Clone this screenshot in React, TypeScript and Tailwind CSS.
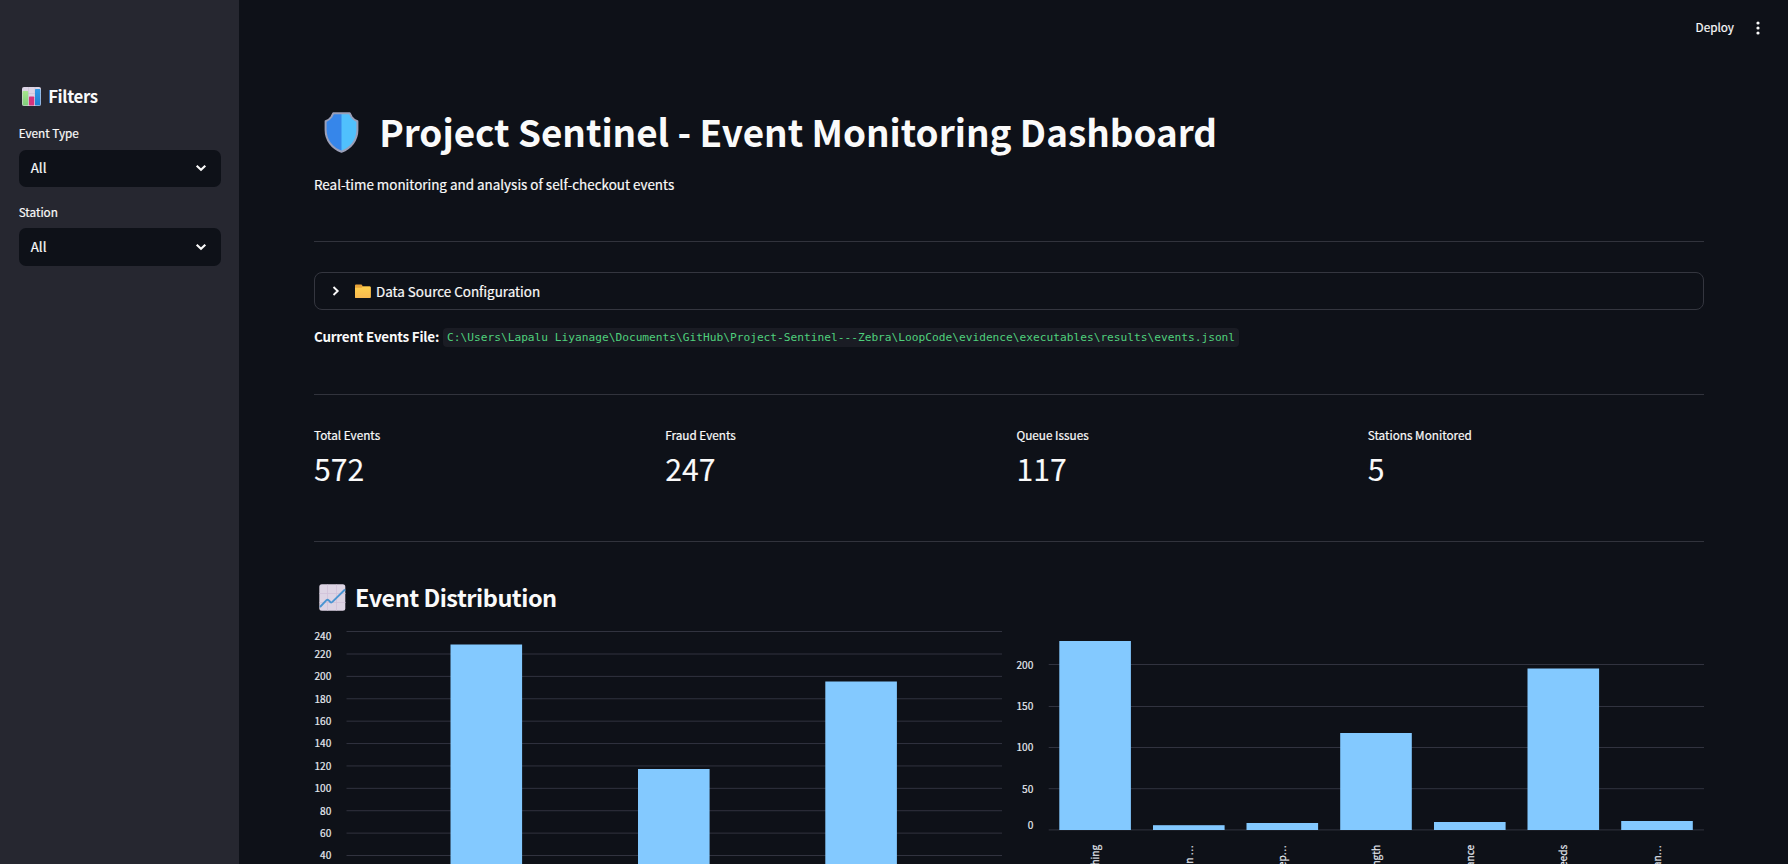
const SANS = "font-['Noto_Sans_CJK_SC','Noto_Sans',sans-serif]";

function BarsIcon() {
  return (
    <svg width="19" height="19" viewBox="0 0 19 19">
      <defs>
        <linearGradient id="gb" x1="0" y1="0" x2="0" y2="1"><stop offset="0" stopColor="#2f9be8" /><stop offset="1" stopColor="#1f7fd0" /></linearGradient>
        <linearGradient id="gg" x1="0" y1="0" x2="0" y2="1"><stop offset="0" stopColor="#a6e58c" /><stop offset="1" stopColor="#7fce7a" /></linearGradient>
      </defs>
      <rect width="19" height="19" rx="2" fill="#ddd5e6" />
      <path d="M6.5 0V19M13 0V19M0 6.5H19M0 13H19" stroke="#c9bdd4" strokeWidth="0.6" />
      <rect x="0.6" y="4" width="5.6" height="14.5" rx="0.7" fill="url(#gg)" />
      <rect x="7" y="9.5" width="5.2" height="9" rx="0.7" fill="#d6337c" />
      <rect x="13" y="2" width="5.4" height="16.5" rx="0.7" fill="url(#gb)" />
    </svg>
  );
}

function ShieldIcon() {
  return (
    <svg width="35" height="41" viewBox="0 0 35 41">
      <path d="M9 1H26L28 5Q30 8 33.6 9V18C33.6 28 27 36.500 17.500 40C8 36.500 1.400 28 1.400 18V9Q5 8 7 5Z" fill="#3686ea" />
      <path d="M17.500 1H26L28 5Q30 8 33.6 9V18C33.6 28 27 36.500 17.500 40Z" fill="#50c0fd" />
      <path d="M9.300 1.200H25.700L27.700 5Q29.800 8 33.4 9.200V18C33.4 28 27 36.300 17.500 39.700C8 36.300 1.600 28 1.600 18V9.200Q5.200 8 7.300 5Z" fill="none" stroke="#9a9fb8" strokeWidth="2" strokeLinejoin="round" />
    </svg>
  );
}

function FolderIcon() {
  return (
    <svg width="16" height="15" viewBox="0 0 16 15">
      <defs><linearGradient id="gf" x1="0" y1="0" x2="0" y2="1"><stop offset="0" stopColor="#ffd04d" /><stop offset="1" stopColor="#f9b950" /></linearGradient></defs>
      <path d="M1 0.500H6.500L8 2.500H14.700Q15.700 2.500 15.700 3.500V13Q15.700 14 14.700 14H1Q0 14 0 13V1.500Q0 0.500 1 0.500Z" fill="#e8a33a" />
      <path d="M0 3.800H6.500L8 2.500H14.700Q15.700 2.500 15.700 3.500V13Q15.700 14 14.700 14H1Q0 14 0 13Z" fill="url(#gf)" />
    </svg>
  );
}

function TrendIcon() {
  return (
    <svg width="27" height="27" viewBox="0 0 27 27" className="mb-[2px]">
      <rect x="0.300" y="0.300" width="26" height="26.500" rx="2.500" fill="#ddd4e4" />
      <path d="M8.500 0.500V26.500M17.500 0.500V26.500M0.500 9.500H26.500M0.500 18.500H26.500" stroke="#d0c1d8" strokeWidth="0.8" />
      <path d="M1 23L7.500 16.200Q8.600 15.200 9.700 16.300L11.300 18Q12.300 18.900 13.400 17.900L26 5.500" fill="none" stroke="#4a95d2" strokeWidth="1.900" />
    </svg>
  );
}

function SelectBox({ label, value }: { label: string; value: string }) {
  return (
    <div className="flex flex-col">
      <div className="flex h-[31px] items-center pb-[2px] text-[11.75px] leading-[20px]">{label}</div>
      <div className="flex h-[37.5px] items-center justify-between rounded-[7px] bg-[#0e1118] pl-3 pr-[14px] text-[13.4px]">
        <span className="pb-[2px]">{value}</span>
        <svg width="12" height="8" viewBox="0 0 12 8"><path d="M1.700 1.700L6 5.800L10.300 1.700" fill="none" stroke="#fafafa" strokeWidth="2.100" /></svg>
      </div>
    </div>
  );
}

function Metric({ label, value }: { label: string; value: string }) {
  return (
    <div className="flex flex-col">
      <span className="h-[21px] text-[11.75px] leading-[20px]">{label}</span>
      <span className="h-[47px] text-[30.2px] leading-[45px] [-webkit-text-stroke:0.1px]">{value}</span>
    </div>
  );
}

type Tick = { v: string; y: number; ty: number };
type Bar = { x: number; y: number; label?: string; cut?: boolean };

const leftTicks: Tick[] = [
  { v: "240", y: 19.5, ty: 24 },
  ...[220, 200, 180, 160, 140, 120, 100, 80, 60, 40].map((n, i) => ({
    v: String(n),
    y: 42 + i * 22.39,
    ty: 42 + i * 22.39,
  })),
];
const leftBars: Bar[] = [{ x: 136.5, y: 32.5 }, { x: 324, y: 157 }, { x: 511.3, y: 69.5 }];

const rightTicks: Tick[] = [
  { v: "200", y: 52.5, ty: 53 },
  { v: "150", y: 94.5, ty: 94.3 },
  { v: "100", y: 135.5, ty: 135.5 },
  { v: "50", y: 176.7, ty: 176.7 },
  { v: "0", y: 217.9, ty: 213.2 },
];
const rightBars: Bar[] = [
  { x: 43.3, y: 29, label: "Barcode Switching" },
  { x: 137, y: 213.2, label: "Checkout Station ", cut: true },
  { x: 230.5, y: 211, label: "Inventory Discrep", cut: true },
  { x: 324.2, y: 121, label: "Long Queue Length" },
  { x: 418, y: 210, label: "Scanner Avoidance" },
  { x: 511.5, y: 56.5, label: "Staffing Needs" },
  { x: 605.2, y: 209, label: "Weight Discrepan", cut: true },
];

function BarChart({ ticks, bars, base, gridX }: { ticks: Tick[]; bars: Bar[]; base: number; gridX: number }) {
  return (
    <svg width="688" height="252" viewBox="0 0 688 252" className="shrink-0">
      {ticks.map((t) => (
        <g key={t.v}>
          <line x1={gridX} x2="688" y1={t.y} y2={t.y} stroke="#31333f" strokeWidth="1" />
          <text x="17.300" y={t.ty + 3.900} textAnchor="end" fontSize="10.1" fill="#e6eaf1" stroke="#e6eaf1" strokeWidth="0.2">{t.v}</text>
        </g>
      ))}
      {bars.map((b) => (
        <g key={b.x}>
          <rect x={b.x} y={b.y} width="71.600" height={base - b.y} fill="#83c9ff" />
          {b.label && (
            <text transform={`translate(${b.x + 39.6} 232.800) rotate(-90)`} textAnchor="end" fontSize="10.1" fill="#e6eaf1" stroke="#e6eaf1" strokeWidth="0.2">
              {b.label}
              {b.cut && <tspan letterSpacing="0.7">...</tspan>}
            </text>
          )}
        </g>
      ))}
    </svg>
  );
}

function Rule() {
  return <div className="h-px shrink-0 bg-[#31333c]" />;
}

export default function App() {
  return (
    <div className={`flex h-screen w-full overflow-hidden bg-[#0e1118] text-[#fafafa] [-webkit-text-stroke:0.2px] ${SANS}`}>
      <aside className="flex w-[239.3px] shrink-0 flex-col bg-[#262730] pl-[18.700px] pr-[18.5px] pt-[84px]">
        <h3 className="flex h-6 items-center gap-[7px] pl-[3.5px] text-[16.8px] font-bold leading-6 tracking-[-0.4px] [-webkit-text-stroke:0px]">
          <BarsIcon />
          <span>Filters</span>
        </h3>
        <div className="mt-[10.5px] flex flex-col gap-[10px]">
          <SelectBox label="Event Type" value="All" />
          <SelectBox label="Station" value="All" />
        </div>
      </aside>
      <main className="flex min-w-0 flex-1 flex-col">
        <header className="flex h-[56px] shrink-0 items-center justify-end gap-[22px] pr-[28px] text-[11.75px]">
          <span className="pb-[2px]">Deploy</span>
          <svg width="4" height="14" viewBox="0 0 4 14" fill="#fafafa"><circle cx="2" cy="2" r="1.600" /><circle cx="2" cy="7" r="1.600" /><circle cx="2" cy="12" r="1.600" /></svg>
        </header>
        <div className="flex flex-col pl-[74.700px] pr-[84px] pt-[48px]">
          <h1 className="flex h-[56px] items-center gap-[20.200px] pl-[10px] text-[36.85px] font-bold leading-[54px] [-webkit-text-stroke:0px]">
            <ShieldIcon />
            <span className="whitespace-nowrap pb-[2px]">Project Sentinel - Event Monitoring Dashboard</span>
          </h1>
          <p className="mt-[12px] h-[25px] text-[13.43px] leading-6">Real-time monitoring and analysis of self-checkout events</p>
          <div className="mt-[44px]"><Rule /></div>
          <div className="mt-[30px] flex h-[38px] items-center rounded-[8px] border border-[#34363f] pl-[17px] text-[13.43px]">
            <svg width="8" height="10" viewBox="0 0 8 10"><path d="M1.500 1L5.700 5L1.500 9" fill="none" stroke="#fafafa" strokeWidth="1.900" /></svg>
            <span className="ml-[15px] mr-[5px]"><FolderIcon /></span>
            <span>Data Source Configuration</span>
          </div>
          <div className="mt-[15px] flex h-6 items-center gap-[4px] text-[13.43px]">
            <strong className="pb-[2px] font-bold tracking-[-0.22px] [-webkit-text-stroke:0px]">Current Events File:</strong>
            <code className="flex h-[19px] items-center whitespace-nowrap rounded-[4px] bg-[#1a1c24] px-1 pt-[2px] font-['DejaVu_Sans_Mono',monospace] text-[11.195px] text-[#4fd07c] [-webkit-text-stroke:0px]">
              {"C:\\Users\\Lapalu Liyanage\\Documents\\GitHub\\Project-Sentinel---Zebra\\LoopCode\\evidence\\executables\\results\\events.jsonl"}
            </code>
          </div>
          <div className="mt-[45px]"><Rule /></div>
          <div className="mt-[30px] grid grid-cols-4 gap-x-[15px]">
            <Metric label="Total Events" value="572" />
            <Metric label="Fraud Events" value="247" />
            <Metric label="Queue Issues" value="117" />
            <Metric label="Stations Monitored" value="5" />
          </div>
          <div className="mt-[48px]"><Rule /></div>
          <h2 className="mt-[38px] flex h-[37px] items-center gap-[9px] pl-[5px] text-[23.5px] font-bold leading-[35px] tracking-[-0.500px] [-webkit-text-stroke:0px]">
            <TrendIcon />
            <span className="pb-[2px]">Event Distribution</span>
          </h2>
          <div className="-mt-[5px] flex justify-between">
            <BarChart ticks={leftTicks} bars={leftBars} base={252} gridX={32.5} />
            <BarChart ticks={rightTicks} bars={rightBars} base={218} gridX={32.7} />
          </div>
        </div>
      </main>
    </div>
  );
}
